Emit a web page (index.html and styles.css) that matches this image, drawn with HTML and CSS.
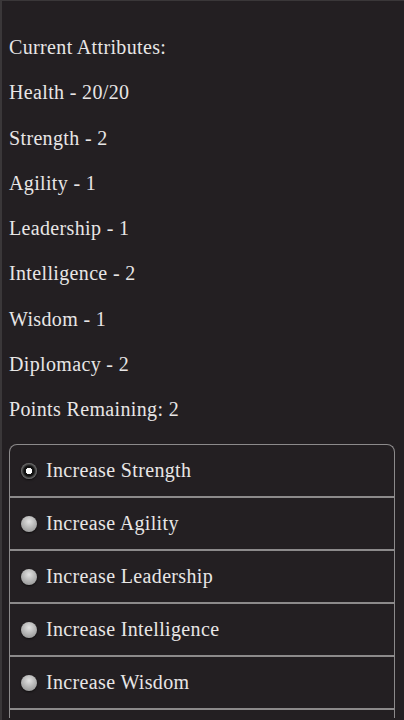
FILE: index.html
```html
<!DOCTYPE html>
<html>
<head>
<meta charset="utf-8">
<link rel="stylesheet" href="styles.css">
</head>
<body>
<div class="page">
  <div class="attrs">
    <p class="line">Current Attributes:</p>
    <p class="line">Health - 20/20</p>
    <p class="line">Strength - 2</p>
    <p class="line">Agility - 1</p>
    <p class="line">Leadership - 1</p>
    <p class="line">Intelligence - 2</p>
    <p class="line">Wisdom - 1</p>
    <p class="line">Diplomacy - 2</p>
    <p class="line">Points Remaining: 2</p>
  </div>
  <div class="choices">
    <label class="choice"><span class="radio checked"></span><span class="label">Increase Strength</span></label>
    <label class="choice"><span class="radio"></span><span class="label">Increase Agility</span></label>
    <label class="choice"><span class="radio"></span><span class="label">Increase Leadership</span></label>
    <label class="choice"><span class="radio"></span><span class="label">Increase Intelligence</span></label>
    <label class="choice"><span class="radio"></span><span class="label">Increase Wisdom</span></label>
    <div class="choice partial"></div>
  </div>
</div>
</body>
</html>
```
FILE: styles.css
```css
html, body {
  margin: 0;
  padding: 0;
  background: #231f22;
  height: 100%;
  overflow: hidden;
}
body {
  font-family: "Liberation Serif", serif;
  color: #e8e6e6;
  border-top: 1px solid #3a3739;
  border-left: 2px solid #3a3739;
  box-sizing: border-box;
}
.page {
  padding: 35px 9px 0 7px;
}
.attrs {
  display: flex;
  flex-direction: column;
  gap: 23.25px;
}
.line {
  margin: 0;
  font-size: 20px;
  letter-spacing: 0.35px;
  line-height: 22px;
}
.choices {
  margin-top: 24px;
  border: 1.5px solid #8c8a8b;
  border-bottom: none;
  border-radius: 8px 8px 0 0;
  display: flex;
  flex-direction: column;
}
.choice {
  display: flex;
  align-items: center;
  height: 51px;
  border-bottom: 2px solid #8c8a8b;
  padding-left: 11px;
}
.choice.partial {
  height: 8px;
  border-bottom: none;
}
.radio {
  width: 16px;
  height: 16px;
  border-radius: 50%;
  flex: none;
  background: radial-gradient(circle at 50% 35%, #e2e2e2 0%, #b9b9b9 45%, #8a8a8a 100%);
  box-shadow: 0 1px 2px rgba(0,0,0,0.6);
}
.radio.checked {
  background: radial-gradient(circle, #ffffff 0 3px, #111 3.5px 5px, #333 6px, #777 8px);
}
.label {
  margin-left: 9px;
  font-size: 20px;
  letter-spacing: 0.35px;
}
```
